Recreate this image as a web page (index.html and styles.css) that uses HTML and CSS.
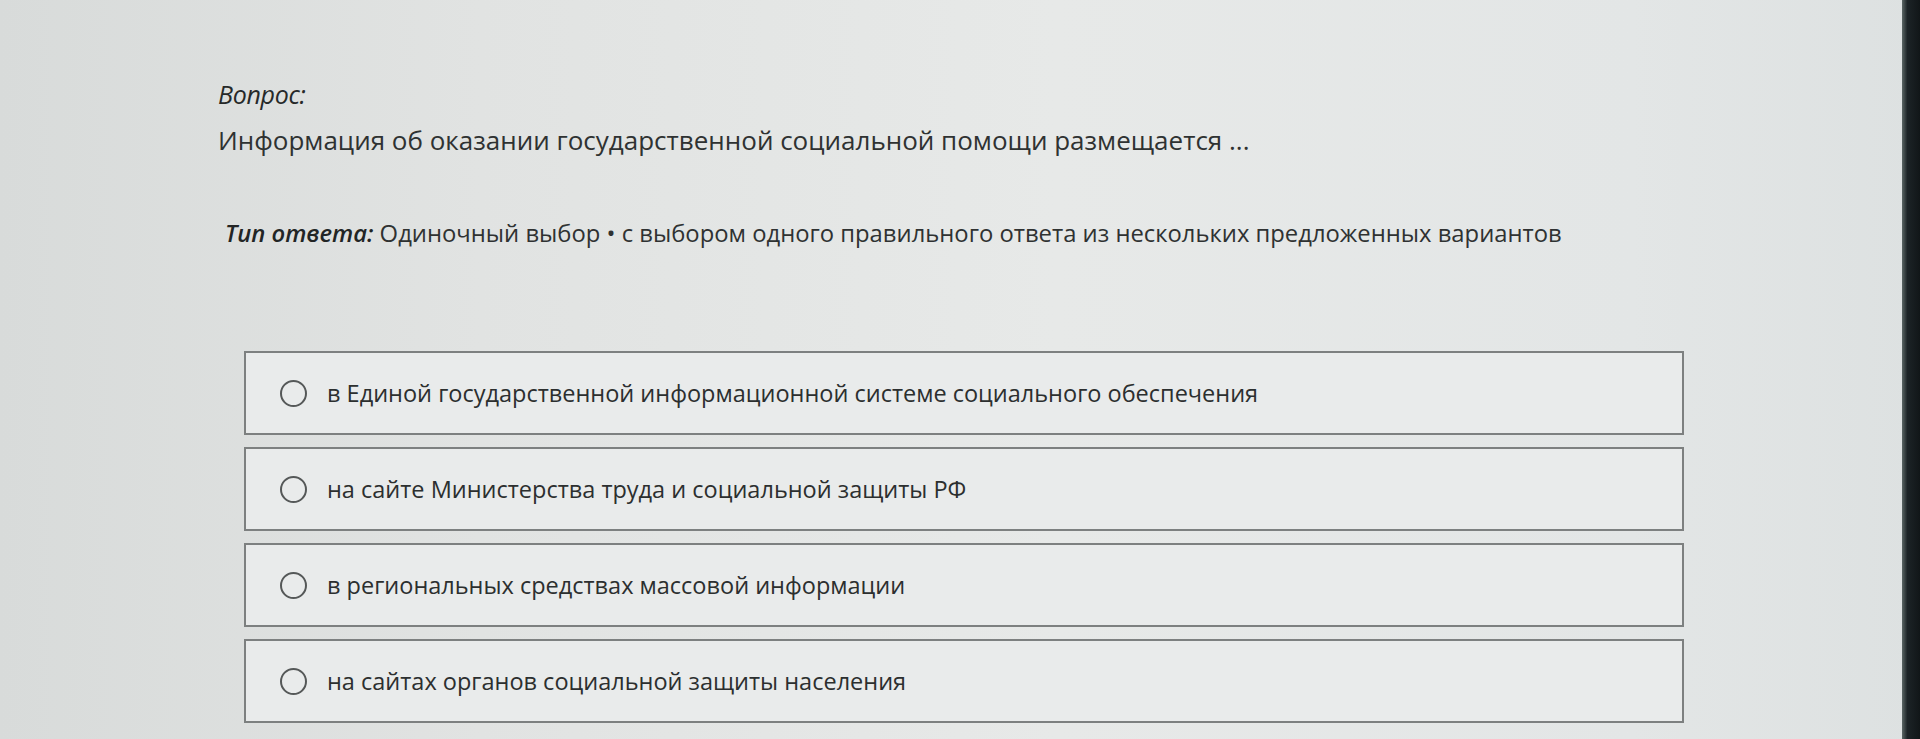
FILE: index.html
```html
<!DOCTYPE html>
<html lang="ru">
<head>
<meta charset="utf-8">
<title>Вопрос</title>
<link rel="stylesheet" href="styles.css">
</head>
<body>
<div class="screen">
  <main class="page">
    <div class="q-label">Вопрос:</div>
    <div class="q-text">Информация об оказании государственной социальной помощи размещается ...</div>
    <div class="q-type"><span class="q-type-label">Тип ответа:</span> Одиночный выбор • с выбором одного правильного ответа из нескольких предложенных вариантов</div>
    <div class="options">
      <label class="option"><span class="radio"></span><span class="opt-text">в Единой государственной информационной системе социального обеспечения</span></label>
      <label class="option"><span class="radio"></span><span class="opt-text">на сайте Министерства труда и социальной защиты РФ</span></label>
      <label class="option"><span class="radio"></span><span class="opt-text">в региональных средствах массовой информации</span></label>
      <label class="option"><span class="radio"></span><span class="opt-text">на сайтах органов социальной защиты населения</span></label>
    </div>
  </main>
  <div class="bezel"></div>
</div>
</body>
</html>
```
FILE: styles.css
```css
html, body {
  margin: 0;
  padding: 0;
  height: 100%;
}
body {
  font-family: "Open Sans", "Noto Sans", "DejaVu Sans", sans-serif;
  color: #2c2f2f;
  overflow: hidden;
}
.screen {
  display: flex;
  height: 739px;
  background: linear-gradient(90deg, #d8dbda 0%, #e1e3e2 25%, #e7e9e8 55%, #e3e6e6 85%, #dde1e1 100%);
}
.page {
  flex: 1;
  padding: 76px 0 0 218px;
}
.bezel {
  width: 18px;
  background: linear-gradient(90deg, #5b6665 0%, #1c2326 30%, #111618 100%);
}
.q-label {
  font-size: 25px;
  line-height: 36px;
  font-style: italic;
  letter-spacing: -0.3px;
  color: #262929;
}
.q-text {
  margin-top: 10px;
  font-size: 26px;
  line-height: 36px;
  color: #2f3232;
}
.q-type {
  margin-top: 57px;
  margin-left: 7px;
  font-size: 23.8px;
  line-height: 36px;
  color: #2f3232;
}
.q-type-label {
  font-style: italic;
  font-weight: 600;
  color: #222525;
}
.options {
  margin-top: 100px;
  margin-left: 26px;
  width: 1440px;
  display: flex;
  flex-direction: column;
  gap: 12px;
}
.option {
  height: 84px;
  box-sizing: border-box;
  border: 2px solid #7d8080;
  background: #e9ebeb;
  display: flex;
  align-items: center;
  padding-left: 34px;
  gap: 20px;
}
.radio {
  width: 27px;
  height: 27px;
  box-sizing: border-box;
  border: 2px solid #555858;
  border-radius: 50%;
  flex: none;
}
.opt-text {
  font-size: 23.5px;
  color: #2c2f2f;
}
```
